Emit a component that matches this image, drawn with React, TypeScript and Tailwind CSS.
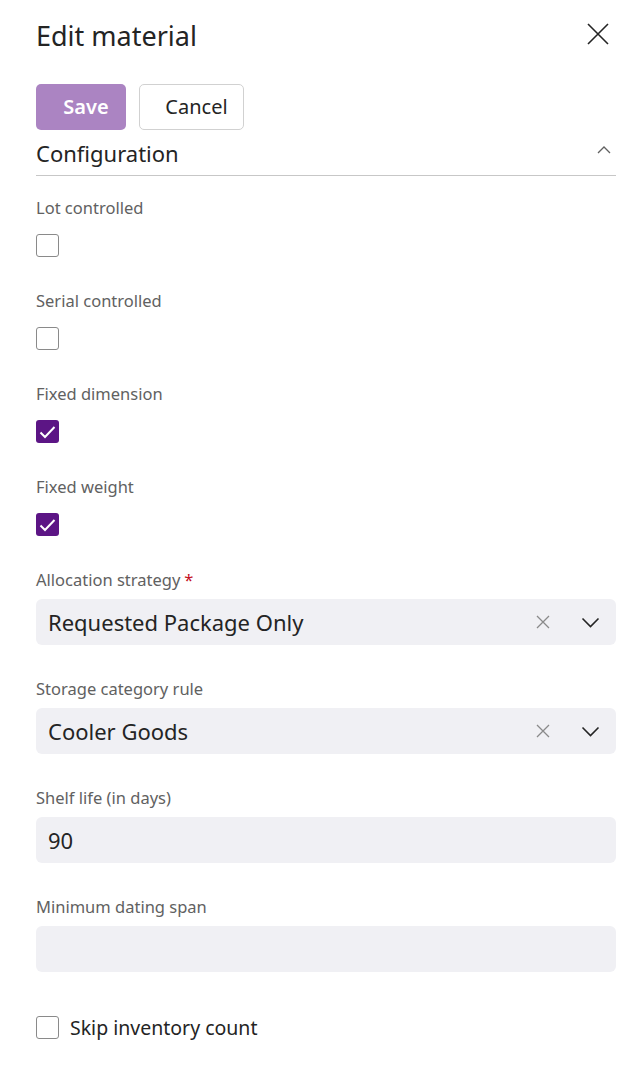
import React from "react";

const font = { fontFamily: '"Noto Sans", "Open Sans", sans-serif' };

export default function App() {
  return (
    <div className="h-[1072px] w-[640px] bg-white pl-[36px] pr-[24px] text-[#242424]" style={font}>
      {/* header */}
      <div className="flex h-[70px] items-center justify-between">
        <h1 className="text-[27px] leading-none text-[#242424]">Edit material</h1>
        <svg width="24" height="24" viewBox="0 0 24 24" className="mr-[6px] mt-[-2px]">
          <path d="M2 2 L22 22 M22 2 L2 22" stroke="#242424" strokeWidth="1.6" fill="none" />
        </svg>
      </div>

      {/* actions */}
      <div className="mt-[14px] flex gap-[13px]">
        <button className="h-[46px] w-[90px] rounded-[5px] bg-[#ab84c2] pl-[10px] text-[20px] font-semibold text-white">Save</button>
        <button className="h-[46px] w-[105px] rounded-[5px] border border-[#d1d1d1] bg-white pl-[10px] text-[20px] text-[#242424]">Cancel</button>
      </div>

      {/* section header */}
      <div className="flex h-[46px] items-center justify-between border-b border-[#c7c7c7]">
        <span className="text-[22px] leading-none">Configuration</span>
        <svg width="16" height="10" viewBox="0 0 16 10" className="mr-[4px] mt-[-6px]">
          <path d="M2 8 L8 2 L14 8" stroke="#616161" strokeWidth="1.3" fill="none" />
        </svg>
      </div>

      <div className="pt-[20px]">
        <CheckField label="Lot controlled" />
        <CheckField label="Serial controlled" />
        <CheckField label="Fixed dimension" checked />
        <CheckField label="Fixed weight" checked />

        <SelectField label="Allocation strategy" required value="Requested Package Only" first />
        <SelectField label="Storage category rule" value="Cooler Goods" />
        <TextField label="Shelf life (in days)" value="90" />
        <TextField label="Minimum dating span" value="" />

        <div className="mt-[44px] flex items-center gap-[11px]">
          <Box />
          <span className="text-[19.5px] leading-none">Skip inventory count</span>
        </div>
      </div>
    </div>
  );
}

function Box({ checked }: { checked?: boolean }) {
  if (checked) {
    return (
      <div className="flex h-[23px] w-[23px] items-center justify-center rounded-[3px] bg-[#5c1585]">
        <svg width="17" height="14" viewBox="0 0 17 14">
          <path d="M1.5 7.5 L6 12 L15.5 2" stroke="#fff" strokeWidth="2" fill="none" />
        </svg>
      </div>
    );
  }
  return <div className="h-[23px] w-[23px] rounded-[3px] border border-[#8a8a8a] bg-white" />;
}

function CheckField({ label, checked }: { label: string; checked?: boolean }) {
  return (
    <div className="mb-[32px]">
      <div className="h-[24px] text-[16.5px] leading-[24px] text-[#616161]">{label}</div>
      <div className="mt-[14px]">
        <Box checked={checked} />
      </div>
    </div>
  );
}

function SelectField({ label, value, required, first }: { label: string; value: string; required?: boolean; first?: boolean }) {
  return (
    <div className={first ? "" : "mt-[32px]"}>
      <div className="h-[24px] text-[16.5px] leading-[24px] text-[#616161]">
        {label}
        {required && <span className="ml-[4px] text-[#c50f1f]">*</span>}
      </div>
      <div className="mt-[7px] flex h-[46px] items-center rounded-[6px] bg-[#f0f0f4] pl-[12px] pr-[16px]">
        <span className="flex-1 text-[22px] leading-none">{value}</span>
        <svg width="16" height="16" viewBox="0 0 16 16" className="mr-[30px]">
          <path d="M2 2 L14 14 M14 2 L2 14" stroke="#8a8a8a" strokeWidth="1.3" fill="none" />
        </svg>
        <svg width="19" height="11" viewBox="0 0 19 11">
          <path d="M1.5 1.5 L9.5 9.5 L17.5 1.5" stroke="#242424" strokeWidth="1.6" fill="none" />
        </svg>
      </div>
    </div>
  );
}

function TextField({ label, value }: { label: string; value: string }) {
  return (
    <div className="mt-[32px]">
      <div className="h-[24px] text-[16.5px] leading-[24px] text-[#616161]">{label}</div>
      <div className="mt-[7px] flex h-[46px] items-center rounded-[6px] bg-[#f0f0f4] px-[12px]">
        <span className="text-[22px] leading-none">{value}</span>
      </div>
    </div>
  );
}
